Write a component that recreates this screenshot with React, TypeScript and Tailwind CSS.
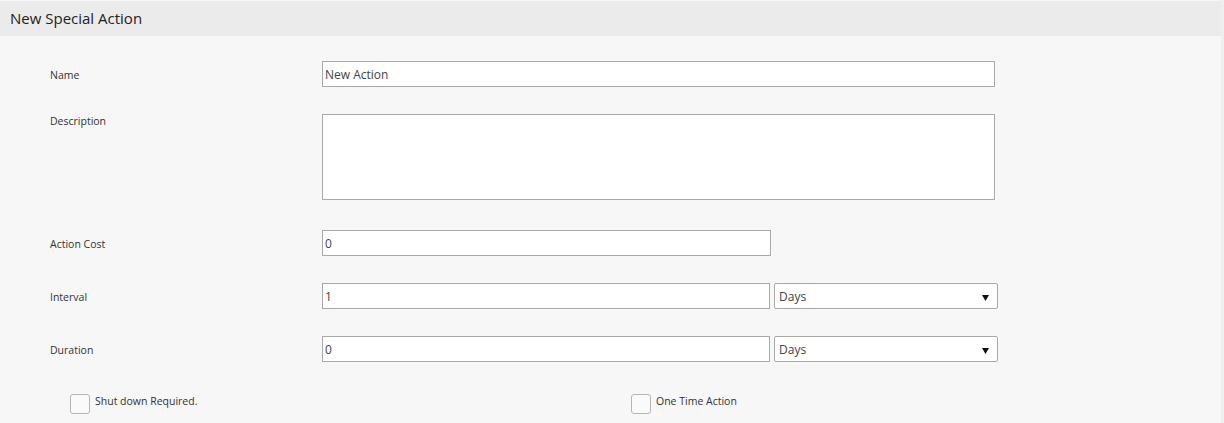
import React from 'react';

const font = { fontFamily: '"Open Sans", "Noto Sans", sans-serif' };

function Field({ value, width }: { value: string; width: string }) {
  return (
    <div
      className={`h-[26px] ${width} bg-white border border-[#a9a9a9] flex items-center pl-[2px] pt-[2px] text-[12px] text-[#444]`}
    >
      {value}
    </div>
  );
}

function Select({ value }: { value: string }) {
  return (
    <div className="h-[26px] w-[224px] ml-[4px] bg-white border border-[#a9a9a9] rounded-[2px] flex items-center justify-between pl-[4px] pr-[8px] pt-[2px] text-[12px] text-[#444]">
      <span>{value}</span>
      <svg width="7" height="7" viewBox="0 0 7 7">
        <path d="M0 1 L7 1 L3.5 7 Z" fill="#111" />
      </svg>
    </div>
  );
}

function Checkbox({ label }: { label: string }) {
  return (
    <div className="flex items-start">
      <div className="w-[20px] h-[20px] bg-[#fafafa] border border-[#b5b5b5] rounded-[3px]" />
      <span className="ml-[5px] text-[10.5px] text-[#333] leading-[15px]">{label}</span>
    </div>
  );
}

export default function App() {
  return (
    <div style={font} className="w-[1224px] h-[423px] bg-[#f7f7f7] border-r-[3px] border-[#efefef] overflow-hidden">
      <div className="h-[35px] mt-[1px] bg-[#ebebeb] flex items-center pl-[10px] text-[15px] text-[#222]">
        New Special Action
      </div>

      <div className="pl-[50px]">
        <div className="flex items-center mt-[25px]">
          <div className="w-[272px] text-[10.5px] text-[#333] pt-[4px]">Name</div>
          <Field value="New Action" width="w-[673px]" />
        </div>

        <div className="flex items-start mt-[27px]">
          <div className="w-[272px] text-[10.5px] text-[#333]">Description</div>
          <div className="h-[86px] w-[673px] bg-white border border-[#a9a9a9]" />
        </div>

        <div className="flex items-center mt-[30px]">
          <div className="w-[272px] text-[10.5px] text-[#333] pt-[4px]">Action Cost</div>
          <Field value="0" width="w-[449px]" />
        </div>

        <div className="flex items-center mt-[27px]">
          <div className="w-[272px] text-[10.5px] text-[#333] pt-[4px]">Interval</div>
          <Field value="1" width="w-[448px]" />
          <Select value="Days" />
        </div>

        <div className="flex items-center mt-[27px]">
          <div className="w-[272px] text-[10.5px] text-[#333] pt-[4px]">Duration</div>
          <Field value="0" width="w-[448px]" />
          <Select value="Days" />
        </div>

        <div className="flex mt-[32px] pl-[20px]">
          <div className="w-[561px]">
            <Checkbox label="Shut down Required." />
          </div>
          <Checkbox label="One Time Action" />
        </div>
      </div>
    </div>
  );
}
